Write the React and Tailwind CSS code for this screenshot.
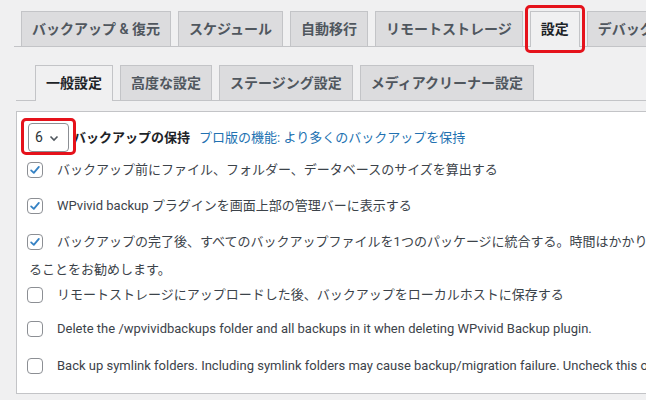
import React from 'react';

const FONT = { fontFamily: 'Roboto, "Noto Sans CJK JP", sans-serif' };

const topTabs = ['バックアップ & 復元', 'スケジュール', '自動移行', 'リモートストレージ', '設定', 'デバッグ', 'ログ'];
const subTabs = ['一般設定', '高度な設定', 'ステージング設定', 'メディアクリーナー設定'];

const Tab = ({ label, active, highlight }) => (
  <div
    className={`relative ml-[7px] shrink-0 border border-b-0 px-[10px] py-[5px] text-[14px] font-semibold leading-[24px] ${
      active ? 'bg-[#f0f0f1] text-[#1d2327] border-[#c3c4c7] -mb-px pb-[6px]' : 'bg-[#dcdcde] text-[#50575e] border-[#c3c4c7]'
    }`}
  >
    {label}
    {highlight && (
      <span className="pointer-events-none absolute -left-[6px] -right-[6px] -top-[7px] -bottom-[6px] rounded-[5px] border-[3px] border-[#e5121b]" />
    )}
  </div>
);

const Check = ({ checked }) => (
  <span className="flex h-4 w-4 shrink-0 items-center justify-center rounded-[4px] border border-[#8c8f94] bg-white">
    {checked && (
      <svg width="14" height="14" viewBox="0 0 20 20">
        <path d="M4.5 10.5 L8.3 14 L15.5 5.5" fill="none" stroke="#3582c4" strokeWidth="2.6" strokeLinecap="round" strokeLinejoin="round" />
      </svg>
    )}
  </span>
);

const Row = ({ checked, children, className }) => (
  <div className={`flex items-center h-5 whitespace-nowrap ${className}`}>
    <Check checked={checked} />
    <span className="ml-[14px] text-[13px] leading-[20px] text-[#3c434a]">{children}</span>
  </div>
);

export default function App() {
  return (
    <div className="w-[646px] h-[400px] overflow-hidden bg-[#f0f0f1]" style={FONT}>
      {/* main tabs */}
      <div className="ml-[14px] pt-[11px] flex border-b border-[#c3c4c7] whitespace-nowrap">
        {topTabs.map((t) => (
          <Tab key={t} label={t} active={t === '設定'} highlight={t === '設定'} />
        ))}
      </div>

      {/* setting sub tabs */}
      <div className="ml-[16px] mt-[18px] pl-[12px] flex border-b border-[#c3c4c7] whitespace-nowrap">
        {subTabs.map((t, i) => (
          <Tab key={t} label={t} active={i === 0} />
        ))}
      </div>

      {/* settings box */}
      <div className="ml-[16px] mt-[10px] w-[900px] border border-r-0 border-[#c3c4c7] bg-white pl-[10px] pt-[11px] pb-[17px]">
        <div className="flex items-center h-[29px] whitespace-nowrap text-[13px]">
          <div className="relative ml-[1px] flex h-[29px] w-[41px] items-center rounded-[4px] border border-[#8c8f94] bg-white pl-[6px] text-[14px] text-[#2c3338]">
            6
            <svg className="ml-[6px]" width="10" height="10" viewBox="0 0 10 10">
              <path d="M1.5 3.5 L5 7 L8.5 3.5" fill="none" stroke="#50575e" strokeWidth="1.6" />
            </svg>
            <span className="pointer-events-none absolute z-10 -left-[8px] -right-[8px] -top-[6px] -bottom-[4px] rounded-[5px] border-[3px] border-[#e5121b]" />
          </div>
          <span className="ml-[4px] font-bold text-[#1d2327]">バックアップの保持</span>
          <span className="ml-[9px] text-[#2271b1]">プロ版の機能: より多くのバックアップを保持</span>
        </div>

        <Row checked className="mt-[8px]">バックアップ前にファイル、フォルダー、データベースのサイズを算出する</Row>
        <Row checked className="mt-[16px]">WPvivid backup プラグインを画面上部の管理バーに表示する</Row>
        <Row checked className="mt-[16px]">
          バックアップの完了後、すべてのバックアップファイルを1つのパッケージに統合する。時間はかかりますが、ディスク容量を大幅に節約できます。特にサーバーリソースが少ないサイトでは、このオプションをオンにす
        </Row>
        <div className="mt-[8px] ml-[2px] h-5 text-[13px] leading-[20px] text-[#3c434a]">ることをお勧めします。</div>
        <Row className="mt-[5px]">リモートストレージにアップロードした後、バックアップをローカルホストに保存する</Row>
        <Row className="mt-[14px]">Delete the /wpvividbackups folder and all backups in it when deleting WPvivid Backup plugin.</Row>
        <Row className="mt-[17px]">
          Back up symlink folders. Including symlink folders may cause backup/migration failure. Uncheck this option to exclude symlink folders from the backup.
        </Row>
      </div>
    </div>
  );
}
